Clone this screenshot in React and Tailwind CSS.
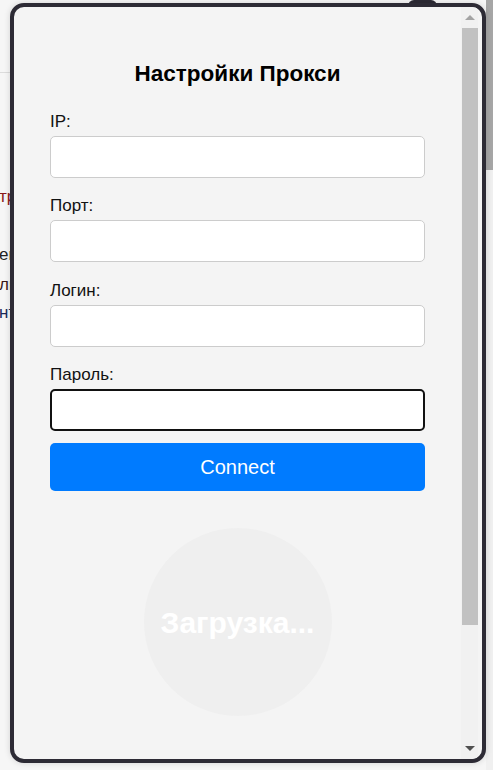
import React from "react";

function Field({ label, focused, className = "" }) {
  return (
    <div className={"flex flex-col " + className}>
      <label className="text-[17px] leading-[20px] text-[#111]">{label}</label>
      <input
        type="text"
        className={
          "mt-[4px] h-[42px] w-full rounded-[5px] bg-white outline-none " +
          (focused ? "border-2 border-[#111]" : "border border-[#cccccc]")
        }
      />
    </div>
  );
}

export default function App() {
  return (
    <div
      className="relative h-[770px] w-[493px] overflow-hidden bg-[#f6f6f6]"
      style={{ fontFamily: '"Liberation Sans", Arial, sans-serif' }}
    >
      {/* background page fragments */}
      <div className="absolute left-0 top-[72px] h-px w-[40px] bg-[#dcdcdc]" />
      <div className="absolute left-[-1px] top-[187px] text-[17px] leading-[20px] text-[#8b1a1a]">тр</div>
      <div className="absolute left-[-1px] top-[245px] text-[17px] leading-[20px] text-[#222]">еп</div>
      <div className="absolute left-[-1px] top-[275px] text-[17px] leading-[20px] text-[#3a1a1a]">ли</div>
      <div className="absolute left-[-1px] top-[303px] text-[17px] leading-[20px] text-[#1a2a5a]">нт</div>
      {/* page scrollbar right */}
      <div className="absolute right-0 top-0 flex h-full w-[7px] flex-col bg-[#f0f0f0]">
        <div className="h-[170px] w-full bg-[#a6a6a6]" />
      </div>

      {/* notch */}
      <div className="absolute left-[408px] top-0 h-[6px] w-[29px] rounded-t-[6px] bg-[#2d2b35]" />

      {/* popup */}
      <div className="absolute left-[10px] top-[3px] flex h-[760px] w-[476px] overflow-hidden rounded-[14px] border-[4px] border-[#2d2b35] bg-[#f4f4f4] shadow-[0_0_6px_rgba(0,0,0,0.15)]">
        <div className="flex w-[447px] flex-col px-[36px] pt-[53px]">
          <h2 className="text-center text-[22.5px] font-bold leading-[28px] text-black">
            Настройки Прокси
          </h2>
          <div className="mt-[24px] flex flex-col">
            <Field label="IP:" />
            <Field label="Порт:" className="mt-[18px]" />
            <Field label="Логин:" className="mt-[19px]" />
            <Field label="Пароль:" className="mt-[18px]" focused />
          </div>
          <button className="mt-[12px] h-[48px] w-full rounded-[5px] bg-[#007bff] text-[20px] text-white">
            Connect
          </button>
          <div className="mt-[37px] flex justify-center">
            <div className="flex h-[188px] w-[188px] items-center justify-center rounded-full bg-[#efefef]">
              <span className="text-[30px] font-bold text-white">Загрузка...</span>
            </div>
          </div>
        </div>
        {/* scrollbar */}
        <div className="flex w-[17px] flex-col items-center bg-[#f1f1f1]">
          <div className="flex h-[21px] w-full items-center justify-center">
            <div className="h-0 w-0 border-x-[5px] border-b-[5px] border-x-transparent border-b-[#a3a3a3]" />
          </div>
          <div className="ml-[1px] h-[597px] w-[16px] bg-[#c1c1c1]" />
          <div className="flex-1" />
          <div className="flex h-[21px] w-full items-center justify-center">
            <div className="h-0 w-0 border-x-[5px] border-t-[5px] border-x-transparent border-t-[#505050]" />
          </div>
        </div>
      </div>
    </div>
  );
}
